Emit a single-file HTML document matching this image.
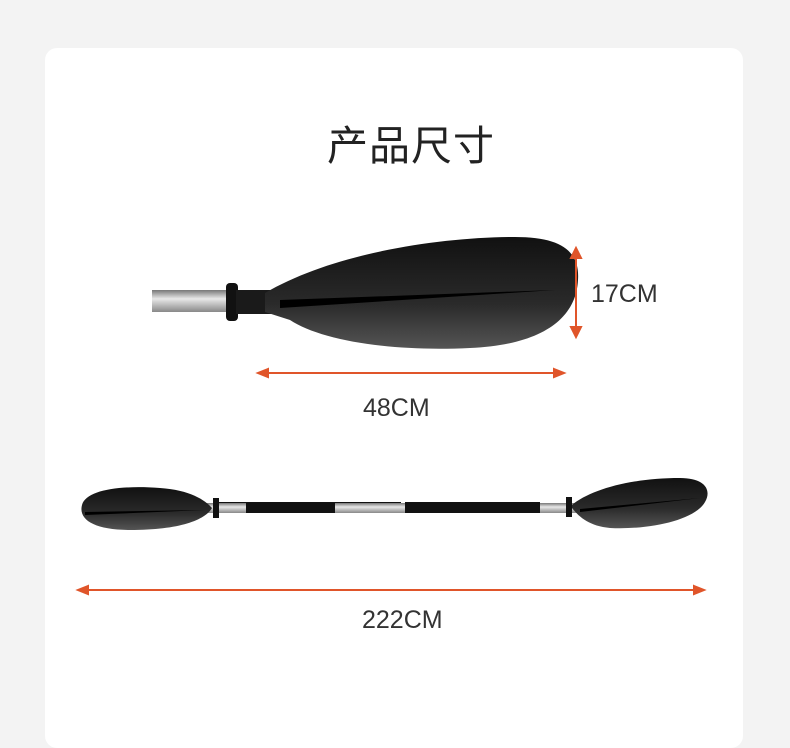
<!DOCTYPE html><html><head><meta charset="utf-8"><style>
body{margin:0;width:790px;height:720px;background:#f3f3f3;position:relative;overflow:hidden;font-family:"Liberation Sans","Noto Sans CJK SC",sans-serif}
.card{position:absolute;left:45px;top:48px;width:698px;height:700px;background:#fff;border-radius:12px}
.t{position:absolute;color:#222;white-space:nowrap}
</style></head><body><div class="card"></div>
<div class="t" style="left:327px;top:112px;font-size:41px;letter-spacing:1px">产品尺寸</div>
<div class="t" style="left:591px;top:280px;font-size:25px;color:#333;letter-spacing:0">17CM</div>
<div class="t" style="left:363px;top:394px;font-size:25px;color:#333;letter-spacing:0">48CM</div>
<div class="t" style="left:362px;top:606px;font-size:25px;color:#333;letter-spacing:0">222CM</div>
<svg width="790" height="720" style="position:absolute;left:0;top:0">
<defs><linearGradient id="sh" x1="0" y1="0" x2="0" y2="1"><stop offset="0" stop-color="#777"/><stop offset=".4" stop-color="#e8e8e8"/><stop offset="1" stop-color="#888"/></linearGradient>
<linearGradient id="bl" x1="0" y1="0" x2="0" y2="1"><stop offset="0" stop-color="#111"/><stop offset=".6" stop-color="#2a2a2a"/><stop offset="1" stop-color="#555"/></linearGradient></defs>
<rect x="152" y="290" width="80" height="22" fill="url(#sh)"/>
<rect x="226" y="283" width="12" height="38" rx="4" fill="#111"/>
<rect x="236" y="290" width="40" height="24" fill="#1a1a1a"/>
<path d="M265 293 C330 255 430 238 510 237 C560 236 580 250 578 280 C576 320 540 345 470 348 C390 352 320 340 290 320 L265 312 Z" fill="url(#bl)"/>
<path d="M280 300 L555 290 L280 308 Z" fill="#000"/>
<g stroke="#e0552a" stroke-width="2" fill="#e0552a">
<line x1="576" y1="252" x2="576" y2="333"/><path d="M571 258 L576 248 L581 258Z"/><path d="M571 327 L576 337 L581 327Z"/>
<line x1="262" y1="373" x2="560" y2="373"/><path d="M268 369 L258 373 L268 377Z"/><path d="M554 369 L564 373 L554 377Z"/>
<line x1="82" y1="590" x2="700" y2="590"/><path d="M88 586 L78 590 L88 594Z"/><path d="M694 586 L704 590 L694 594Z"/>
</g>
<rect x="190" y="503" width="400" height="10" fill="url(#sh)"/>
<rect x="216" y="502" width="185" height="11" fill="#111"/>
<rect x="216" y="503" width="30" height="10" fill="url(#sh)"/>
<rect x="335" y="503" width="68" height="10" fill="url(#sh)"/>
<rect x="405" y="502" width="135" height="11" fill="#111"/>
<rect x="213" y="498" width="6" height="20" fill="#111"/><rect x="566" y="497" width="6" height="20" fill="#111"/>
<path d="M82 505 C86 490 120 485 160 488 C190 490 205 500 212 508 C205 520 180 530 130 530 C95 530 78 520 82 505Z" fill="url(#bl)"/>
<path d="M572 505 C590 490 630 478 680 478 C705 478 712 490 705 502 C695 520 650 530 610 528 C590 526 580 518 572 508Z" fill="url(#bl)"/>
<path d="M85 512 L205 510 L85 515Z M580 509 L700 498 L580 512Z" fill="#000"/>
</svg></body></html>
